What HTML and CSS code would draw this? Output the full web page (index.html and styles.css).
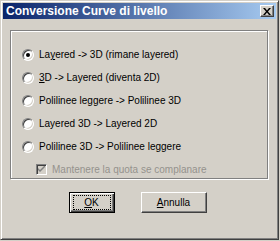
FILE: index.html
```html
<!DOCTYPE html>
<html lang="it">
<head>
    <meta charset="UTF-8">
    <title>Conversione Curve di livello</title>
    <link rel="stylesheet" href="styles.css">
</head>
<body>

    <div class="window">
        <div class="titlebar">
            <span class="title">Conversione Curve di livello</span>
            <span class="close">
                <svg width="8" height="7" viewBox="0 0 8 7">
                    <path d="M0 0h2l2 2.5 2-2.5h2l-3 3.5 3 3.5h-2l-2-2.5-2 2.5h-2l3-3.5z" fill="#000"/>
                </svg>
            </span>
        </div>

        <div class="content">
            <div class="group">
                <label class="row">
                    <span class="radio checked"></span>
                    <span>La<u>y</u>ered -&gt; 3D (rimane layered)</span>
                </label>
                <label class="row">
                    <span class="radio"></span>
                    <span><u>3</u>D -&gt; Layered (diventa 2D)</span>
                </label>
                <label class="row">
                    <span class="radio"></span>
                    <span>Polilinee leggere -&gt; Polilinee 3D</span>
                </label>
                <label class="row">
                    <span class="radio"></span>
                    <span>Layered 3D -&gt; Layered 2D</span>
                </label>
                <label class="row">
                    <span class="radio"></span>
                    <span>Polilinee 3D -&gt; Polilinee leggere</span>
                </label>
                <label class="row sub disabled">
                    <span class="check">
                        <svg width="7" height="7" viewBox="0 0 7 7">
                            <path d="M0 2v2l2 2 5-5v-2l-5 5z" fill="#808080"/>
                        </svg>
                    </span>
                    <span>Mantenere la quota se complanare</span>
                </label>
            </div>

            <div class="buttons">
                <button class="btn default"><span class="focus"><u>O</u>K</span></button>
                <button class="btn wide"><u>A</u>nnulla</button>
            </div>
        </div>
    </div>

</body>
</html>
```

FILE: styles.css
```css
body {
    margin: 0;
    font-family: "Liberation Sans", Arial, sans-serif;
    font-size: 10px;
    background-color: #d4d0c8;
}
u {
    text-decoration: underline;
}
.window {
    width: 279px;
    height: 240px;
    box-sizing: border-box;
    background-color: #d4d0c8;
    border: 1px solid;
    border-color: #d4d0c8 #404040 #404040 #d4d0c8;
    box-shadow: inset 1px 1px 0 #fff, inset -1px -1px 0 #808080;
    padding: 2px;
    display: flex;
    flex-direction: column;
}
.titlebar {
    height: 16px;
    background: linear-gradient(to right, #0a246a, #a6caf0);
    display: flex;
    align-items: center;
    justify-content: space-between;
    padding: 0 2px 0 3px;
}
.title {
    color: #fff;
    font-weight: bold;
    font-size: 12px;
}
.close {
    width: 14px;
    height: 12px;
    box-sizing: border-box;
    background-color: #d4d0c8;
    border: 1px solid;
    border-color: #fff #404040 #404040 #fff;
    box-shadow: inset -1px -1px 0 #808080;
    display: flex;
    align-items: center;
    justify-content: center;
}
.content {
    padding: 11px 7px 0 7px;
    display: flex;
    flex-direction: column;
}
.group {
    border: 1px solid #808080;
    box-shadow: 1px 1px 0 #fff, inset 1px 1px 0 #fff;
    margin-right: 1px;
    padding: 12px 0 0 11px;
    height: 135px;
    display: flex;
    flex-direction: column;
}
.row {
    height: 23px;
    flex-shrink: 0;
    display: flex;
    align-items: center;
    gap: 5px;
    color: #000;
}
.radio {
    width: 12px;
    height: 12px;
    box-sizing: border-box;
    border-radius: 50%;
    background-color: #fff;
    border: 1px solid;
    border-color: #808080 #fff #fff #808080;
    box-shadow: inset 1px 1px 0 #404040, inset -1px -1px 0 #d4d0c8;
    display: flex;
    align-items: center;
    justify-content: center;
}
.radio.checked::after {
    content: "";
    width: 4px;
    height: 4px;
    border-radius: 50%;
    background-color: #000;
}
.sub {
    padding-left: 14px;
}
.check {
    width: 11px;
    height: 11px;
    box-sizing: border-box;
    background-color: #d4d0c8;
    border: 1px solid;
    border-color: #808080 #fff #fff #808080;
    box-shadow: inset 1px 1px 0 #404040;
    display: flex;
    align-items: center;
    justify-content: center;
}
.disabled {
    color: #95928d;
}
.buttons {
    display: flex;
    justify-content: center;
    gap: 26px;
    margin-top: 13px;
    padding-right: 4px;
}
.btn {
    width: 66px;
    height: 21px;
    box-sizing: border-box;
    font-family: "Liberation Sans", Arial, sans-serif;
    font-size: 10px;
    color: #000;
    background-color: #d4d0c8;
    border: 1px solid;
    border-color: #fff #404040 #404040 #fff;
    box-shadow: inset -1px -1px 0 #808080;
    padding: 0;
}
.btn.default {
    width: 46px;
    border: 1px solid #000;
    box-shadow: inset 1px 1px 0 #fff, inset -1px -1px 0 #404040, inset -2px -2px 0 #808080;
    display: flex;
    align-items: center;
    justify-content: center;
}
.focus {
    width: 36px;
    height: 13px;
    border: 1px dotted #000;
    display: flex;
    align-items: center;
    justify-content: center;
}
```
